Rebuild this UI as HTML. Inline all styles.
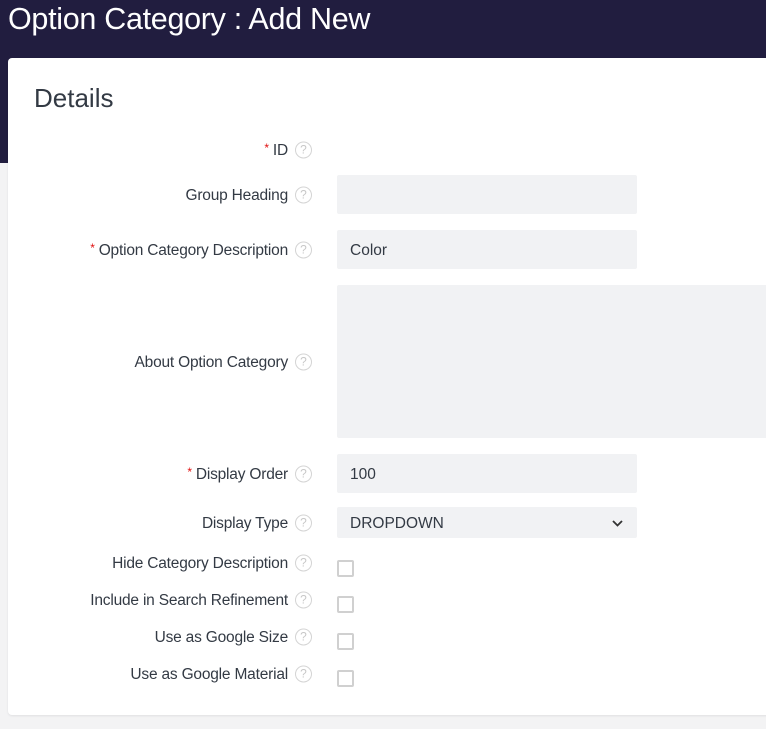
<!DOCTYPE html>
<html><head><style>
body{margin:0;width:766px;height:729px;background:#f3f3f4;position:relative;overflow:hidden;font-family:"Liberation Sans",sans-serif;color:#333a44}
.hdr{position:absolute;left:0;top:0;width:766px;height:163px;background:#211d3f}
.hdr h1{position:absolute;left:8px;top:2px;margin:0;font-weight:normal;font-size:30.5px;color:#fff;letter-spacing:-0.3px}
.card{position:absolute;left:8px;top:58px;width:770px;height:657px;background:#fff;border-radius:4px;box-shadow:0 1px 2px rgba(0,0,0,.08)}
.det{position:absolute;left:34px;top:83px;font-size:26px;color:#333a44}
.lbl{position:absolute;right:478px;font-size:15.5px;letter-spacing:-0.2px;white-space:nowrap;transform:translateY(-45%)}
.lbl b{color:#e01010;font-weight:normal;font-size:12px;margin-right:4px;position:relative;top:-3px}
.q{position:absolute;left:295px;width:15px;height:15px;border:1.5px solid #d4d4d4;border-radius:50%;transform:translateY(-50%);color:#c8c8c8;font-size:12px;text-align:center;line-height:15px}
.in{position:absolute;left:337px;width:300px;height:39px;background:#f1f2f4;border-radius:2px;font-size:15.5px;line-height:41px;box-sizing:border-box;padding-left:13px}
.cb{position:absolute;left:337px;width:13px;height:13px;border:2px solid #d0d0d0;border-radius:2px}
</style></head><body>
<div class="hdr"><h1>Option Category : Add New</h1></div>
<div class="card"></div>
<div class="det">Details</div>

<div class="lbl" style="top:150px"><b>*</b>ID</div><div class="q" style="top:150px">?</div>
<div class="lbl" style="top:195px">Group Heading</div><div class="q" style="top:195px">?</div>
<div class="in" style="top:175px"></div>
<div class="lbl" style="top:250px"><b>*</b>Option Category Description</div><div class="q" style="top:250px">?</div>
<div class="in" style="top:230px">Color</div>
<div class="lbl" style="top:362px">About Option Category</div><div class="q" style="top:362px">?</div>
<div class="in" style="top:285px;width:440px;height:153px"></div>
<div class="lbl" style="top:474px"><b>*</b>Display Order</div><div class="q" style="top:474px">?</div>
<div class="in" style="top:454px">100</div>
<div class="lbl" style="top:523px">Display Type</div><div class="q" style="top:523px">?</div>
<div class="in" style="top:507px;height:31px;line-height:33px">DROPDOWN
<svg style="position:absolute;right:14px;top:13px" width="11" height="7" viewBox="0 0 11 7"><path d="M1 1l4.5 4.5L10 1" fill="none" stroke="#333" stroke-width="1.8"/></svg></div>
<div class="lbl" style="top:563px">Hide Category Description</div><div class="q" style="top:563px">?</div>
<div class="cb" style="top:560px"></div>
<div class="lbl" style="top:600px">Include in Search Refinement</div><div class="q" style="top:600px">?</div>
<div class="cb" style="top:596px"></div>
<div class="lbl" style="top:637px">Use as Google Size</div><div class="q" style="top:637px">?</div>
<div class="cb" style="top:633px"></div>
<div class="lbl" style="top:674px">Use as Google Material</div><div class="q" style="top:674px">?</div>
<div class="cb" style="top:670px"></div>
</body></html>
